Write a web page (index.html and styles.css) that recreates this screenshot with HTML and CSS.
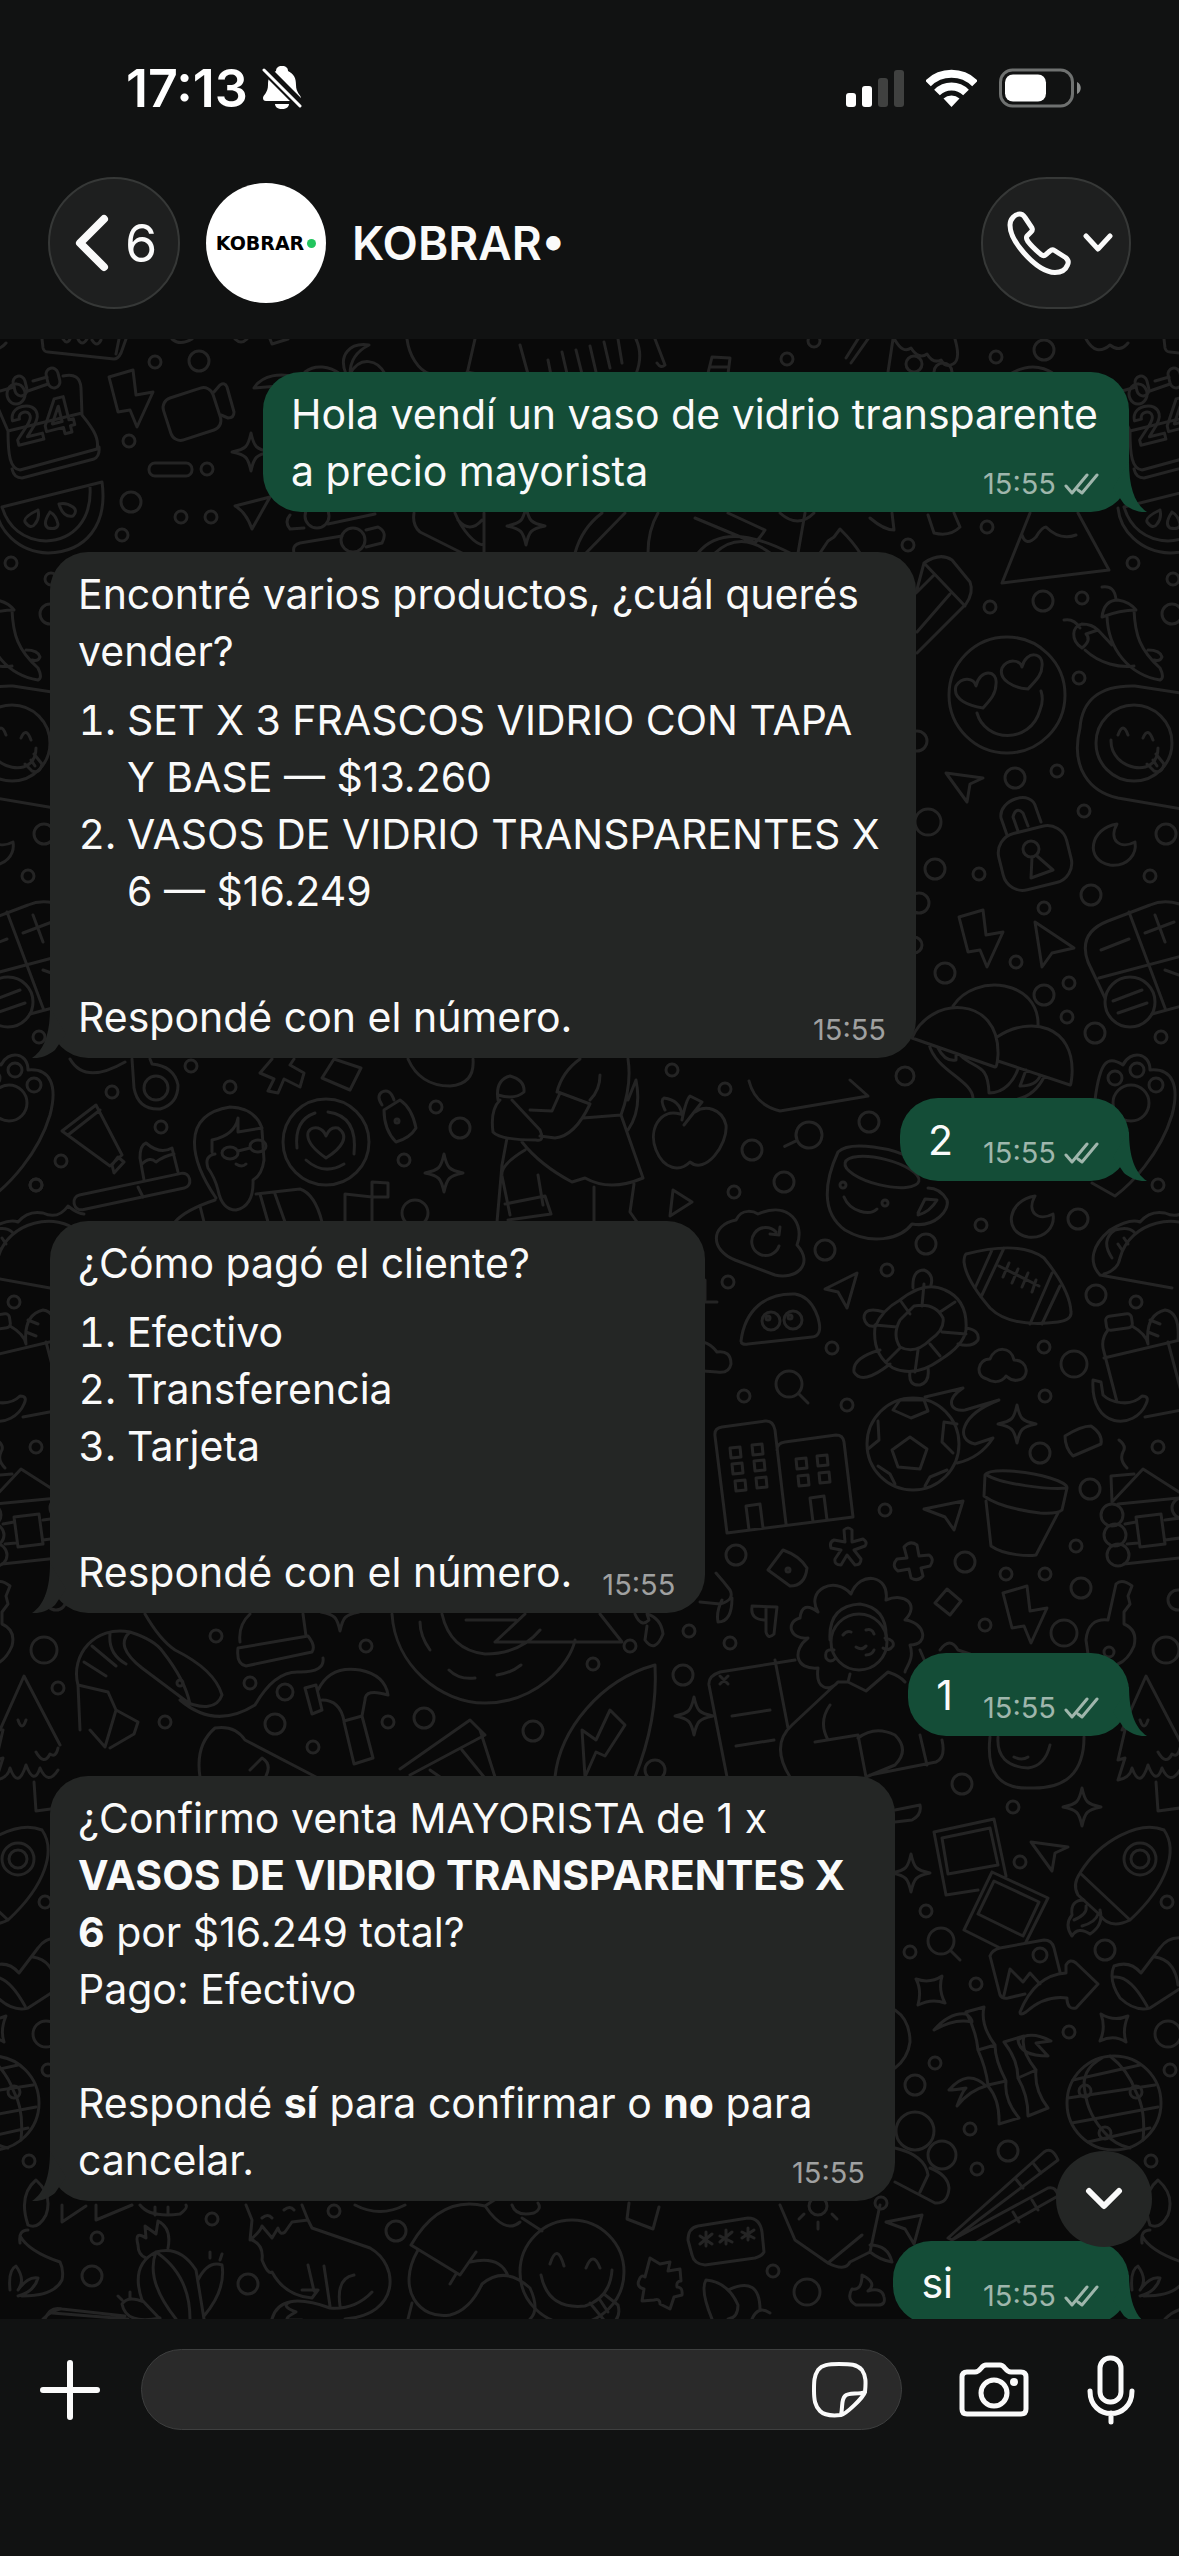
FILE: index.html
```html
<!DOCTYPE html>
<html lang="es">
<head>
	<meta charset="utf-8">
	<meta name="viewport" content="width=device-width, initial-scale=1">
	<title>KOBRAR</title>
	<link rel="stylesheet" href="styles.css">
</head>
<body>
	<!-- shared shapes -->
	<svg class="defs" width="0" height="0" aria-hidden="true">
		<defs>
			<g id="checks"><path d="M2 13l6 7L23 2M14 17l4 3L33 2"/></g>
			<path id="tail" d="M22 10C22 36 28 52 40 60C32 61 23 57 17 52L6 36Z"/>
			<circle id="dot" r="6"/>
			<circle id="ring" r="10"/>
			<path id="star" d="M0-19C3-5 5-3 19 0C5 3 3 5 0 19C-3 5-5 3-19 0C-5-3-3-5 0-19Z"/>
			<path id="bolt" d="M-21-21L3-28L6-3L23-6L7 29L0 12L-12 14Z"/>
			<path id="cursor" d="M-19-11L18-6L5 0L2 18Z"/>
			<path id="moon" d="M5-22C-22-18-28 14-2 19C16 21 25 8 23-4C8 4-4-6 5-22Z"/>
			<g id="lens"><circle r="13"/><path d="M10 10l9 9"/></g>
			<path id="cloud" d="M-16 11C-28 9-26-9-13-9C-8-22 8-22 11-8C26-8 27 11 15 12C8 14 4 8 3 8C-2 16-12 14-16 11Z"/>
		</defs>
	</svg>

	<header class="header">
		<div class="status">
			<div class="status-left">
				<span>17:13</span>
				<svg width="40" height="44" viewBox="0 0 40 44" aria-hidden="true">
					<path d="M20 0c4 0 6 2 6 5c6 3 8 7 8 14c0 8 5 10 5 13c0 2-1 3-3 3H4c-2 0-3-1-3-3c0-3 5-5 5-13c0-7 2-11 8-14c0-3 2-5 6-5ZM13 38h14c0 3-3 5-7 5s-7-2-7-5Z" fill="#fff"/>
					<path d="M3 3L38 38" stroke="#111" stroke-width="10"/>
					<path d="M2 4L38 40" stroke="#fff" stroke-width="3" stroke-linecap="round"/>
				</svg>
			</div>
			<div class="status-right">
				<svg width="58" height="38" viewBox="0 0 58 38" aria-hidden="true">
					<rect x="0" y="24" width="10" height="14" rx="3" fill="#fff"/>
					<rect x="16" y="17" width="10" height="21" rx="3" fill="#fff"/>
					<rect x="32" y="9" width="10" height="29" rx="3" fill="#404140"/>
					<rect x="48" y="1" width="10" height="37" rx="3" fill="#404140"/>
				</svg>
				<svg width="51" height="38" viewBox="0 0 51 38" fill="none" stroke="#fff" stroke-width="8" aria-hidden="true">
					<path d="M2 14.500A33.500 33.500 0 0 1 49 14.500"/>
					<path d="M11 23.500A20.500 20.500 0 0 1 40 23.500"/>
					<path d="M17.500 29.500A12 12 0 0 1 33.500 29.500L25.500 38Z" fill="#fff" stroke="none"/>
				</svg>
				<svg width="82" height="40" viewBox="0 0 82 40" aria-hidden="true">
					<rect x="1.500" y="2" width="72" height="36" rx="12" fill="none" stroke="#6f7170" stroke-width="3"/>
					<rect x="6" y="6.500" width="41" height="27" rx="8" fill="#fff"/>
					<path d="M78 14c5 2 5 10 0 12z" fill="#8a8c8b"/>
				</svg>
			</div>
		</div>

		<div class="nav">
			<button class="glass back" type="button" aria-label="Volver">
				<svg width="34" height="58" viewBox="0 0 34 58" aria-hidden="true"><path d="M29 5L5 29L29 53" class="line" stroke-width="8"/></svg>
				<span>6</span>
			</button>
			<div class="avatar">KOBRAR<i class="avatar-dot"></i></div>
			<h1 class="name">KOBRAR•</h1>
			<button class="glass call" type="button" aria-label="Llamar">
				<svg width="64" height="64" viewBox="0 0 64 64" aria-hidden="true"><path class="line" stroke-width="5" d="M12.700 3C16 3 17 5 18 6.500L25 17C26 19 25 20 24 21L20 25C18.500 27 20 29 21 30.500C25 36 30 40 34 43.500C36 45 37.500 45 39 43.500L43 40C44.500 38.500 46 38.500 47.500 39.500L58.500 46.500C61 48.500 62 51 60.500 54C58.500 59 54 61.500 48 61.500C36 61 25 51 17 42C9 33 3 22 3 14C3 8 8 3 12.700 3Z"/></svg>
				<svg width="30" height="20" viewBox="0 0 30 20" aria-hidden="true"><path class="line" stroke-width="5" d="M3 3L15 16L27 3"/></svg>
			</button>
		</div>
	</header>

	<main class="chat">
		<svg class="wallpaper" viewBox="0 339 1179 1980" preserveAspectRatio="xMinYMin slice" aria-hidden="true">
			<g id="doodles">
				<!-- top strip -->
				<path d="M1164 339L1165 348Q1166 352 1170 352L1236 359Q1240 359 1243 353L1248 339M1238 354L1241 339M1185 339q4 6 7 0M1200 339q4 8 9 0M1214 340q5 8 9 0"/>
				<path d="M172 339Q180 346 192 339M270 339L272 344L288 339M235 339q6 6 12 0M407 339C409 355 418 370 430 374M475 339L467 374M467 372L498 378M528 374L520 345M346 374C338 355 350 342 369 345C355 352 350 362 350 374C360 355 378 360 385 374M254 388C262 375 280 372 300 378M254 388L290 385M305 372C315 364 330 366 340 374"/>
				<path d="M548 360l4 20M562 352l6 26M576 350l6 24M590 346l6 26M604 342l6 26M618 339l4 24M636 339C642 352 640 364 636 374M655 339l10 26q-4 4-8-2M708 373l4-16l18 1l-2 16M710 367h18M846 358L858 339M851 363L868 339M893 339L888 372M895 340q8 14 16 8q8 12 16 6q6 10 14 6q4 8 12 4q8-4 2-25M1086 339q10 18 24 6q10 8 18-2"/>
				<use href="#dot" x="787" y="359"/><use href="#dot" x="996" y="357"/><use href="#dot" x="814" y="341"/><use href="#ring" x="1044" y="350"/><circle cx="914" cy="364" r="8"/><circle cx="943" cy="372" r="9"/><path d="M1010 374q24-14 44 0"/>
				<!-- calendar -->
				<path d="M1122 391l14-4M1155 381l14-4M1185 376Q1202 372 1203 388L1204 415C1212 425 1222 437 1219 449L1142 470C1132 469 1130 455 1130 431L1204 413M1130 431L1120 408M1134 469Q1136 478 1144 478L1216 459Q1222 456 1221 447"/>
				<rect x="1136" y="376" width="12" height="20" rx="6" transform="rotate(-14 1142 386)"/><rect x="1169" y="368" width="12" height="20" rx="6" transform="rotate(-14 1175 378)"/>
				<text x="1138" y="446" font-size="50" font-weight="700" transform="rotate(-14 1138 446)">24</text>
				<use href="#bolt" x="1252" y="398"/>
				<use href="#dot" x="1277" y="362"/><use href="#ring" x="1321" y="361"/><use href="#dot" x="1251" y="441"/>
				<rect x="1288" y="392" width="52" height="44" rx="10" transform="rotate(-18 1314 414)"/><path d="M1336 392L1342 385Q1347 382 1349 387L1356 412Q1356 418 1350 418L1343 415"/>
				<rect x="1271" y="463" width="43" height="13" rx="6"/><use href="#dot" x="1329" y="469"/><use href="#star" x="1373" y="452"/>
				<path d="M1124 507L1224 482C1230 525 1208 552 1170 553C1140 552 1120 530 1118 508M1212 487C1214 520 1195 540 1168 541C1145 540 1130 527 1124 507M1160 510Q1145 517 1147 522Q1153 530 1157 524Q1162 518 1160 510M1172 512Q1164 524 1170 528Q1180 530 1180 524Q1178 515 1172 512M1181 504Q1185 518 1195 516Q1200 511 1195 507Q1188 502 1181 504"/>
				<use href="#ring" x="1253" y="502"/><use href="#dot" x="1303" y="517"/><use href="#dot" x="1333" y="517"/><use href="#dot" x="1244" y="535"/><use href="#dot" x="1133" y="563"/>
				<path d="M1392 497L1357 506Q1368 512 1374 529ZM1138 384a9 10 0 1 0 .1 0M1147 392L1170 384"/>
				<!-- between first two bubbles -->
				<path d="M290 515Q284 522 290 529L304 528M328 524L375 514M294 553Q292 545 300 543L342 536M366 530L378 527Q388 532 382 543L366 547M414 513Q412 525 420 532L462 553M455 513C462 530 475 545 484 545M484 513V553M458 520Q470 534 482 520M575 553C580 535 590 522 602 513M586 553L625 513M648 553Q648 530 658 513M695 518L755 543Q762 535 765 530L728 513M698 553Q725 520 790 553M715 553Q740 530 770 553M805 513L798 553M820 553l8-12l6-4l6-8q14 14 20 24M870 518q14 12 24 12l-2-17M928 515l6 18q16 4 26-6l-6-14"/>
				<circle cx="317" cy="516" r="12"/><circle cx="353" cy="540" r="12"/><use href="#star" x="526" y="526"/><use href="#dot" x="908" y="545"/><use href="#dot" x="987" y="527"/><path d="M780 513q18 16 34 0"/>
				<path d="M1030 513L1002 583L1109 570L1078 513M1022 535q4 12 14 2q6-10 10-10q14 14 30 8"/>
				<path d="M916 593L924 563Q940 552 952 560L970 582Q974 592 966 604L917 653M924 563L965 606M934 575L917 592M950 594L917 632"/>
				<!-- faces, peppers, padlock -->
				<circle cx="1007" cy="695" r="58"/>
				<path d="M983 708C970 706 952 700 956 686C962 676 974 678 976 686C980 668 998 670 996 684C996 694 990 700 983 708M1028 689C1014 688 998 680 1002 668C1008 658 1020 660 1022 667C1026 650 1044 652 1042 666C1042 676 1034 682 1028 689M977 713C985 742 1030 745 1040 710Q1044 700 1041 691"/>
				<path d="M1102 587Q1115 585 1116 600M1102 617Q1104 600 1118 600Q1130 602 1136 610Q1120 610 1102 617ZM1107 616C1108 650 1130 675 1160 680Q1165 678 1160 668C1140 650 1135 635 1134 610M1064 620Q1074 618 1080 628M1082 648C1070 640 1072 626 1082 624Q1092 624 1098 630L1086 634Q1092 640 1082 648M1085 650C1100 664 1120 668 1134 666M1098 630L1112 645M1148 650Q1160 650 1162 657Q1160 662 1154 660"/>
				<circle cx="1134" cy="743" r="38"/><path d="M1200 696L1135 686C1100 685 1082 700 1080 728C1070 768 1090 792 1118 798L1200 812M1118 735q5-14 10 0M1143 738q5-12 10 2M1111 740C1110 770 1158 780 1158 748M1147 764L1154 771Q1162 774 1164 764L1156 754M1153 760l4 6"/>
				<use href="#ring" x="1043" y="601"/><use href="#dot" x="990" y="607"/><use href="#dot" x="1082" y="598"/><use href="#ring" x="1172" y="614"/><use href="#dot" x="1173" y="579"/><use href="#dot" x="1079" y="678"/><use href="#cursor" x="965" y="784"/>
				<use href="#ring" x="1015" y="778"/><use href="#dot" x="1057" y="771"/><use href="#dot" x="1084" y="811"/><use href="#moon" x="1112" y="846"/><use href="#ring" x="1166" y="834"/><use href="#ring" x="917" y="741"/>
				<rect x="1000" y="829" width="70" height="58" rx="20" transform="rotate(-14 1035 858)"/><path d="M1007 835L1001 818C998 800 1032 788 1036 808L1041 822M1018 831L1013 817Q1016 806 1023 813L1028 826M1032 857L1031 878L1053 870L1037 856"/><circle cx="1031" cy="849" r="8"/>
				<circle cx="928" cy="822" r="13"/><use href="#ring" x="935" y="869"/><use href="#dot" x="979" y="874"/><use href="#ring" x="919" y="903"/><use href="#ring" x="1091" y="895"/><use href="#dot" x="1150" y="876"/><use href="#dot" x="1044" y="908"/><use href="#bolt" x="980" y="938"/>
				<path d="M1035 922L1074 948L1052 953L1042 967Z"/><use href="#ring" x="945" y="973"/><use href="#dot" x="1016" y="962"/><use href="#ring" x="1044" y="995"/><use href="#dot" x="1069" y="983"/><use href="#dot" x="1067" y="1017"/><use href="#ring" x="1095" y="1033"/><use href="#dot" x="1161" y="1037"/><circle cx="914" cy="945" r="8"/>
				<path d="M1105 998L1088 962C1080 940 1090 928 1108 921L1150 905Q1166 898 1185 906M1129 912L1165 1008M1099 978L1182 956M1101 950L1129 939M1145 933L1174 922M1155 915L1165 942M1165 970l14 5M1152 1014L1182 1006"/><circle cx="1130" cy="1002" r="25"/><path d="M1113 1001l29-11M1118 1013l29-10"/>
				<!-- mushrooms and paw -->
				<path d="M912 1038C930 995 1000 995 998 1055Q997 1068 995 1067ZM953 1006C975 972 1040 980 1038 1026M997 1037C1030 1015 1075 1025 1072 1075Q1071 1086 1070 1085L998 1061M929 1044C935 1070 972 1080 973 1098M938 1048Q945 1062 956 1060V1054M960 1055C975 1070 988 1062 989 1093C1005 1093 1014 1080 1018 1069M1026 1070L1020 1086Q1036 1086 1040 1076M1044 1077Q1035 1095 1018 1099"/>
				<path d="M1095 1100C1100 1060 1108 1055 1123 1065C1130 1050 1150 1052 1150 1070C1172 1068 1180 1085 1172 1115C1160 1155 1130 1185 1115 1196L1092 1183"/><circle cx="1115" cy="1078" r="7"/><circle cx="1137" cy="1070" r="7"/><circle cx="1156" cy="1085" r="7"/><circle cx="1131" cy="1103" r="18"/>
				<!-- row under the product list -->
				<path d="M70 1059Q85 1085 125 1062M132 1059L134 1088Q138 1110 160 1109Q178 1104 178 1085Q174 1066 152 1064L150 1059M272 1059l-12 14l14 6l-6 12l10 2l6-14l16 8l4-14l-14-8l4-6M334 1059L322 1078L350 1090L361 1068ZM408 1059Q420 1086 450 1086Q475 1084 473 1059M62 1131L96 1105L122 1155L110 1166ZM68 1135L100 1110M112 1165L118 1157L124 1162L114 1173Z"/>
				<circle cx="156" cy="1088" r="12"/><use href="#dot" x="191" y="1066"/><use href="#dot" x="112" y="1092"/><use href="#dot" x="161" y="1127"/><use href="#dot" x="230" y="1087"/><use href="#dot" x="61" y="1161"/><use href="#dot" x="36" y="1185"/>
				<rect x="73" y="1184" width="118" height="15" rx="7" transform="rotate(-12 132 1192)"/><path d="M138 1187l5 10M144 1180L140 1158Q140 1145 146 1143Q160 1155 172 1148L178 1172M142 1164q8-8 14-2q8-6 18-8"/>
				<path d="M216 1198C190 1160 180 1115 230 1107Q255 1108 262 1128L238 1132V1118Q235 1135 212 1140V1152M215 1154Q204 1156 208 1168Q215 1178 218 1190Q222 1210 236 1210Q254 1206 253 1180Q262 1175 264 1160L262 1130M175 1222Q185 1210 215 1200M200 1206l4 16M256 1194L300 1189Q315 1194 322 1222M275 1194l10 28M260 1194l8 28M236 1164q6 4 10 0"/><ellipse cx="230" cy="1153" rx="8" ry="6"/><ellipse cx="258" cy="1146" rx="8" ry="6"/><path d="M238 1151l12-3"/>
				<circle cx="326" cy="1142" r="43"/><path d="M326 1158C300 1140 306 1126 318 1128Q324 1130 326 1136Q330 1126 338 1128C350 1136 342 1148 326 1158M297 1148Q294 1120 315 1113M328 1112Q358 1116 354 1154M306 1160Q324 1176 344 1164M345 1222V1194L372 1197V1222M372 1197V1182L388 1183V1197Z"/>
				<path d="M382 1105Q376 1096 382 1092Q390 1088 394 1100M384 1110L400 1100Q412 1108 416 1128Q410 1138 396 1142Q384 1130 384 1110Z"/><circle cx="397" cy="1121" r="2"/><use href="#ring" x="460" y="1128"/><use href="#dot" x="436" y="1107"/><use href="#dot" x="404" y="1160"/><use href="#star" x="444" y="1173"/><circle cx="415" cy="1213" r="13"/>
				<path d="M498 1100Q495 1080 510 1076Q525 1080 524 1092Q515 1100 498 1095M512 1100L540 1130Q545 1142 536 1140Q500 1140 493 1132Q490 1110 500 1100M530 1110L552 1111L560 1093M557 1092Q562 1072 580 1059M590 1100Q600 1090 600 1075M558 1092L590 1104Q575 1136 555 1138L540 1136M583 1118L621 1115L643 1178Q610 1192 585 1178L572 1182Q540 1165 522 1142M621 1115Q632 1085 628 1059M628 1100l8-20q6 30-8 50M507 1138L502 1165L497 1222M525 1150Q500 1165 502 1176L510 1215M538 1175L543 1205M505 1204L545 1196L551 1214L508 1220M594 1187V1222M634 1184L630 1212L637 1222"/>
				<path d="M665 1110Q660 1100 664 1098Q680 1100 682 1115M682 1120Q686 1100 690 1096L702 1102L684 1125M680 1114C660 1108 648 1130 656 1150C664 1170 680 1172 690 1162C705 1175 728 1145 726 1125C722 1108 705 1105 695 1112M673 1190L692 1202L670 1216ZM749 1081Q755 1105 780 1111L868 1096L850 1080"/><use href="#dot" x="672" y="1070"/><use href="#dot" x="725" y="1089"/><use href="#dot" x="734" y="1192"/><use href="#ring" x="752" y="1150"/><use href="#ring" x="784" y="1182"/><use href="#ring" x="869" y="1122"/><circle cx="905" cy="1076" r="9"/>
				<use href="#lens" transform="translate(809 1135) rotate(110)"/>
				<!-- mug -->
				<ellipse cx="882" cy="1172" rx="38" ry="13" transform="rotate(14 882 1172)"/><path d="M915 1160C895 1148 850 1140 838 1152C825 1180 820 1212 845 1230C870 1245 900 1240 912 1224C935 1228 950 1210 947 1200Q940 1188 928 1188M918 1213L925 1199L937 1200Q930 1212 918 1215M844 1197C850 1212 870 1216 877 1209"/><circle cx="843" cy="1185" r="3"/><circle cx="885" cy="1203" r="3"/>
				<path d="M735 1260C710 1250 710 1225 736 1220C742 1207 755 1212 758 1214C790 1200 805 1225 797 1245C815 1265 795 1280 775 1275ZM779 1246A14 14 0 1 1 776 1232M770 1234l9 1l1-8"/><use href="#ring" x="825" y="1250"/><use href="#ring" x="926" y="1244"/><use href="#dot" x="728" y="1282"/><use href="#dot" x="887" y="1270"/><use href="#dot" x="981" y="1225"/><use href="#ring" x="1078" y="1219"/><use href="#moon" x="1030" y="1218"/>
				<path d="M825 1289L857 1273L847 1308L838 1292ZM741 1341C745 1310 765 1293 795 1294C815 1297 822 1325 819 1332Q817 1337 812 1337L748 1344Q741 1345 741 1341"/><circle cx="771" cy="1321" r="9"/><circle cx="793" cy="1320" r="9"/><circle cx="768" cy="1318" r="2"/><circle cx="790" cy="1317" r="2"/><path d="M705 1280v20M703 1302h14M703 1342q8 2 14 10q14-2 14 12q-2 10-14 8l-14-1"/>
				<!-- turtle -->
				<path d="M875 1327Q882 1310 900 1300Q925 1280 945 1290Q968 1300 966 1330Q964 1345 940 1360Q915 1378 893 1368Q872 1355 875 1327ZM914 1306Q935 1302 943 1318Q945 1330 930 1340Q915 1355 900 1347Q892 1335 900 1320ZM924 1284l-2 22M900 1300l10 14M955 1302l-15 10M875 1325l22 2M966 1334l-24-2M940 1356l-10-12M915 1372l3-22M886 1362l14-14M913 1288Q912 1270 924 1270Q934 1274 931 1285M884 1312Q864 1306 864 1318Q866 1328 876 1326M966 1328Q980 1330 978 1340Q972 1348 958 1344M880 1350Q852 1358 854 1372Q862 1386 890 1364M910 1372Q908 1386 920 1385Q930 1382 928 1368"/>
				<path d="M966 1254Q1020 1240 1044 1258Q1070 1290 1071 1312Q1072 1320 1058 1322Q1010 1328 990 1308Q966 1280 964 1262Q964 1256 966 1254ZM992 1250L975 1288M1004 1248L981 1297M1052 1273L1030 1324M1060 1286L1042 1324M999 1266l40 20M1009 1263l-6 14M1018 1269l-6 14M1028 1273l-6 14M1036 1280l-4 12"/>
				<use href="#cloud" x="1003" y="1368"/><circle cx="1074" cy="1364" r="13"/><use href="#dot" x="1044" y="1347"/><use href="#dot" x="1045" y="1396"/><use href="#dot" x="832" y="1348"/><use href="#lens" x="789" y="1384"/><use href="#dot" x="744" y="1396"/><use href="#dot" x="847" y="1405"/><use href="#ring" x="1096" y="1295"/><use href="#dot" x="1136" y="1302"/><use href="#dot" x="1158" y="1185"/>
				<!-- buildings -->
				<path d="M727 1533L715 1436Q714 1428 722 1427L765 1421Q773 1420 775 1430L786 1524M777 1450Q777 1443 785 1442L836 1435Q843 1435 844 1442L853 1517L727 1533M749 1530L746 1506L760 1504L763 1528M813 1522L810 1498L824 1496L827 1520"/>
				<path d="M730 1448l10-1l1 10l-10 1zM752 1445l10-1l1 10l-10 1zM732 1464l10-1l1 10l-10 1zM754 1461l10-1l1 10l-10 1zM735 1481l10-1l1 10l-10 1zM756 1478l10-1l1 10l-10 1zM796 1459l10-1l1 10l-10 1zM817 1456l10-1l1 10l-10 1zM798 1476l10-1l1 10l-10 1zM819 1473l10-1l1 10l-10 1z"/>
				<circle cx="913" cy="1444" r="46"/><path d="M892 1450L910 1437L927 1449L920 1469L898 1467ZM893 1410L900 1400H924L928 1411L911 1418ZM944 1422L957 1424M944 1422L942 1442L953 1453M878 1421L879 1440L868 1449M878 1466L890 1474L895 1484M947 1470L930 1477L925 1486M925 1397L963 1388C945 1400 950 1412 965 1410L999 1400C960 1415 955 1440 975 1444L993 1438Q980 1458 957 1463"/>
				<use href="#star" x="1017" y="1424"/><use href="#ring" x="1040" y="1453"/><path d="M1065 1436q16-10 26-10q12 8 10 18l-28 12q-8-8-8-20Z"/>
				<path d="M985 1475Q988 1470 1010 1471C1040 1473 1068 1482 1067 1488L1062 1510Q1058 1514 1040 1513Q1000 1508 984 1496ZM987 1475C1000 1484 1050 1490 1067 1488M986 1501L991 1546C1005 1556 1030 1556 1036 1555L1058 1513M924 1509L963 1501L954 1530L945 1517Z"/><use href="#dot" x="885" y="1510"/><use href="#ring" x="1090" y="1489"/>
				<!-- taco, lunch bag, cabin -->
				<path d="M1100 1275C1088 1262 1092 1245 1110 1230Q1130 1218 1140 1222Q1150 1210 1165 1213Q1180 1220 1190 1206Q1200 1214 1206 1214M1104 1274Q1118 1270 1120 1258C1130 1220 1180 1212 1200 1232M1112 1258Q1100 1240 1115 1230Q1128 1226 1134 1232M1100 1275L1172 1288M1118 1244l4 6M1124 1238l4 6"/>
				<rect x="1106" y="1315" width="26" height="14" rx="4" transform="rotate(-8 1119 1322)"/><path d="M1108 1330Q1100 1340 1104 1352L1117 1402M1104 1358L1180 1340M1132 1326Q1146 1334 1148 1344Q1145 1315 1165 1310Q1180 1312 1178 1340M1150 1320l10 4M1148 1332l10 4M1168 1342L1182 1395M1145 1417L1182 1410M1093 1380L1101 1382L1103 1395C1110 1402 1130 1408 1142 1396Q1150 1396 1146 1404C1135 1430 1090 1430 1093 1380"/>
				<use href="#dot" x="1158" y="1447"/><path d="M1119 1440q8 6 4 12q-4 8 4 16M1112 1502L1111 1476L1134 1474M1112 1502L1143 1469L1179 1492M1118 1504L1180 1498M1125 1524L1136 1522M1165 1520L1180 1518M1127 1544L1138 1543M1165 1540L1180 1538M1124 1564L1180 1558M1136 1517L1161 1514L1165 1544L1140 1547Z"/><circle cx="1112" cy="1515" r="11"/><circle cx="1115" cy="1535" r="11"/><circle cx="1118" cy="1555" r="11"/><circle cx="1182" cy="1508" r="10"/>
				<path d="M845 1542l-1-12q4-4 8 0l0 12l11-3q5 3 2 7l-11 4l7 9q0 6-6 6l-8-10l-6 10q-7 0-6-6l6-9l-10-2q-2-6 3-8ZM907 1558l-3-11q6-7 13-2l2 11l10-1q6 4 1 11l-9 2l2 8q-5 6-12 2l-2-9l-11 2q-7-5-1-12ZM768 1570L783 1550Q800 1556 807 1568Q805 1586 790 1586ZM935 1603L947 1589L961 1601L950 1615ZM752 1606L777 1607L774 1634Q768 1640 766 1632V1608M766 1620Q750 1620 752 1607"/><circle cx="788" cy="1570" r="2"/>
				<use href="#ring" x="736" y="1555"/><use href="#ring" x="965" y="1562"/><use href="#dot" x="1006" y="1574"/><use href="#dot" x="1045" y="1574"/><use href="#dot" x="1076" y="1546"/><use href="#ring" x="1081" y="1588"/><use href="#dot" x="985" y="1625"/><use href="#bolt" x="1024" y="1614"/><circle cx="1064" cy="1633" r="13"/><circle cx="1166" cy="1650" r="13"/><use href="#ring" x="1178" y="1600"/>
				<path d="M1108 1620L1116 1584Q1122 1578 1132 1586L1128 1596L1130 1604L1124 1612V1624Q1138 1630 1134 1646Q1128 1660 1118 1664M1108 1620Q1088 1618 1086 1640L1088 1654"/><circle cx="1109" cy="1652" r="5"/>
				<!-- girl with notebook -->
				<circle cx="859" cy="1642" r="28"/><path d="M830 1640Q828 1606 860 1604Q888 1608 886 1640M834 1650q-10-2-8 8q4 6 10 0M885 1638q10 2 8 8q-4 6-10 2M843 1635q4-5 8-3M866 1630q6-2 8 4M856 1647q6 4 10-1M866 1655q6 0 8-5M800 1618C785 1622 790 1640 808 1638C792 1650 795 1670 818 1668C815 1690 830 1692 838 1682M818 1612C805 1590 835 1575 851 1594C860 1570 890 1575 886 1600C905 1592 920 1605 905 1620C925 1622 930 1645 910 1645C915 1660 905 1668 905 1672M818 1612Q802 1600 800 1618M850 1674L848 1682L838 1682L792 1725Q770 1745 790 1777M848 1682L866 1691L888 1672Q900 1676 905 1682M830 1705Q818 1722 828 1740M815 1742L858 1735L866 1777M795 1660L720 1672Q708 1676 709 1685L727 1777M775 1660L788 1728M732 1716l38-6M736 1746l38-6M720 1676l8 8M720 1684l8-8M858 1738Q875 1725 895 1735Q910 1750 895 1765L866 1777M920 1650l6 14M920 1735L927 1765M942 1740q4 18-6 22L870 1775"/>
				<path d="M990 1737Q984 1790 1030 1788Q1084 1790 1084 1737M998 1737Q996 1766 1028 1768Q1045 1766 1050 1745M1014 1757q8 4 14 0M940 1650q10-14 18 0l12 4"/><use href="#star" x="694" y="1716"/><use href="#ring" x="683" y="1675"/><use href="#dot" x="730" y="1643"/><use href="#dot" x="689" y="1631"/>
				<!-- beanie, shrimp, hammer, surfboard -->
				<path d="M716 1573Q724 1582 730 1590Q735 1600 720 1604L700 1602M722 1600q-6 12-4 22q14 0 14-24M145 1614Q160 1640 175 1650Q215 1670 222 1695Q215 1715 180 1700M78 1685C70 1655 95 1625 130 1632Q155 1640 163 1652Q185 1680 190 1704L142 1668M78 1685L80 1730M78 1685L108 1692M84 1662l22 14M92 1646l24 20M110 1634q-2 20 16 30M130 1632q-16 14 12 36M108 1692L116 1710L105 1747L90 1730M116 1710L138 1722L134 1734L110 1748M180 1700Q215 1730 255 1705Q275 1670 300 1672Q325 1672 323 1658"/><circle cx="180" cy="1683" r="3"/>
				<path d="M240 1642Q238 1625 250 1614M303 1614L306 1636M238 1648L308 1636Q316 1646 312 1652L246 1666Q236 1664 238 1648ZM305 1688L316 1685L322 1710L312 1714ZM318 1690Q330 1665 360 1670Q385 1675 388 1695Q365 1688 365 1700L362 1716L344 1721Q340 1700 322 1700M344 1722L354 1764L373 1758L362 1716"/>
				<use href="#star" x="340" y="1612"/><use href="#dot" x="216" y="1636"/><use href="#dot" x="250" y="1683"/><use href="#dot" x="165" y="1722"/><use href="#ring" x="275" y="1724"/><use href="#dot" x="313" y="1747"/><use href="#dot" x="388" y="1722"/><use href="#ring" x="424" y="1718"/><use href="#dot" x="366" y="1646"/><circle cx="285" cy="1692" r="8"/><use href="#ring" x="533" y="1731"/><use href="#dot" x="593" y="1664"/>
				<path d="M392 1614C395 1665 440 1703 485 1703C535 1703 570 1665 575 1640M442 1614Q450 1650 485 1654Q520 1654 540 1630M420 1622q0 14 10 28M449 1670q10 10 26 8M497 1675q14-2 24-10M466 1620h50M495 1642L525 1614M495 1642H622L600 1614M200 1777Q195 1745 215 1728Q235 1725 245 1740L316 1777M400 1769L470 1720L485 1735L410 1775M480 1730L495 1777M462 1750L484 1777M430 1770l10 7M250 1770l12-12q10 6 4 18"/>
				<path d="M555 1777C560 1730 600 1680 655 1665Q658 1720 635 1777M585 1777L582 1730L596 1740L610 1710L625 1725L605 1756L596 1752Z"/><use href="#ring" x="655" y="1770"/><use href="#dot" x="630" y="1646"/><path d="M635 1614q6 14 14 6l-2-6q14 4 16 20q-8 20-18 6l2-14"/><use href="#dot" x="58" y="1688"/>
				<!-- tree -->
				<path d="M1122 1730L1146 1676L1182 1745M1125 1730L1118 1760L1125 1758L1118 1780Q1130 1778 1132 1768Q1140 1790 1148 1765Q1156 1786 1162 1768Q1170 1786 1180 1770M1140 1720q4 12 8 0M1158 1752q8 14 14 2q6 4 8 -6M1156 1782L1158 1811L1180 1808"/>
				<!-- right column -->
				<path d="M895 1810L920 1805Q922 1815 912 1820L895 1822M934 1832L994 1819L1006 1876M934 1832L946 1895L978 1890M942 1838L990 1828L998 1865L948 1874ZM992 1872L1048 1898L1026 1942M992 1872L964 1930L1000 1948M994 1881L1039 1902L1023 1936L978 1914ZM990 1956Q992 1950 1000 1948L1044 1940Q1052 1940 1054 1948L1060 1972M990 1956L1000 1995Q1002 1999 1008 1998L1025 1994M1004 1995L1010 1969L1023 1982L1030 1973L1040 1984M1020 2012Q1035 1975 1066 1973V1965Q1070 1958 1076 1963L1098 1984L1076 2008Q1068 2010 1067 2000V1998Q1045 1995 1026 2012Q1020 2016 1020 2012Z"/><circle cx="1040" cy="1955" r="7"/>
				<path d="M1080 1873C1100 1840 1140 1820 1164 1830C1178 1850 1168 1885 1130 1920Q1110 1930 1100 1915L1078 1895Q1072 1885 1080 1873ZM1080 1873L1130 1920M1084 1900Q1070 1900 1072 1915Q1064 1925 1072 1936Q1078 1926 1090 1934Q1104 1925 1100 1910M1074 1920q14-6 12-14M1082 1926q14-4 16-12"/><circle cx="1140" cy="1859" r="16"/><circle cx="1140" cy="1859" r="9"/>
				<use href="#ring" x="962" y="1784"/><use href="#dot" x="1013" y="1807"/><use href="#star" x="1082" y="1807"/><use href="#star" x="911" y="1873"/><use href="#cursor" x="1050" y="1853"/><use href="#dot" x="1020" y="1862"/><use href="#dot" x="926" y="1911"/><use href="#lens" x="941" y="1941"/><use href="#dot" x="910" y="1952"/><use href="#dot" x="976" y="1984"/><circle cx="1105" cy="1950" r="10"/><use href="#dot" x="1167" y="1902"/>
				<path d="M916 1979Q930 1984 942 1976Q938 1990 945 2003Q932 1998 918 2005Q922 1990 916 1979ZM1101 2014Q1114 2022 1128 2016Q1122 2030 1126 2042Q1114 2034 1100 2041Q1106 2028 1101 2014Z"/><path d="M1141 1973L1160 1948Q1168 1936 1184 1938M1141 1973Q1130 1960 1114 1966Q1108 1980 1120 1998Q1135 2012 1150 2008L1184 1986M1114 1977Q1130 1975 1147 2006M1155 1957Q1175 1960 1178 1985"/>
				<path d="M966 2012L984 2007Q980 2025 995 2045L978 2050M966 2012Q976 2030 978 2050Q986 2068 988 2085L1006 2081Q995 2060 995 2045M988 2086Q1000 2100 999 2124L1019 2118Q1004 2100 1006 2082M934 2030Q950 2012 966 2014Q972 2018 972 2022Q955 2018 934 2030M949 2090Q968 2068 986 2086Q970 2090 957 2106Q962 2092 966 2088Q955 2090 949 2090M1004 2042L1024 2036Q1020 2050 1036 2070L1018 2078Q1018 2060 1004 2042M1018 2078Q1028 2095 1028 2116L1048 2108Q1034 2090 1036 2070M1018 2040Q1030 2030 1051 2041L1036 2043L1048 2056Q1020 2056 1018 2040"/>
				<circle cx="1114" cy="2103" r="47"/><path d="M1073 2080L1140 2065M1068 2098L1155 2085M1072 2123L1158 2107M1088 2142L1150 2128M1102 2058Q1080 2070 1085 2092Q1088 2115 1105 2133Q1115 2145 1130 2148M1110 2056Q1128 2070 1136 2092Q1146 2110 1143 2140"/><use href="#dot" x="1085" y="2091"/><use href="#dot" x="1136" y="2092"/><use href="#dot" x="1105" y="2133"/>
				<circle cx="1168" cy="2034" r="13"/><use href="#dot" x="1069" y="2032"/><use href="#dot" x="1170" y="2070"/><use href="#dot" x="935" y="2063"/><use href="#ring" x="915" y="2085"/><circle cx="915" cy="2131" r="19"/><circle cx="942" cy="2155" r="14"/><use href="#dot" x="970" y="2129"/><use href="#ring" x="1008" y="2151"/><use href="#dot" x="977" y="2169"/><use href="#dot" x="1151" y="2161"/><use href="#dot" x="881" y="2203"/>
				<path d="M895 2010Q910 2020 910 2042Q908 2058 895 2068M895 2148Q925 2155 928 2175L920 2192M895 2182L935 2203Q948 2204 949 2188Q948 2175 930 2168M948 2238L1044 2152Q1052 2146 1058 2160L952 2240ZM952 2240L1048 2188Q1056 2186 1058 2196L975 2243M1015 2178l8 10M1033 2163l8 10M1013 2212l6 10M1032 2200l6 10M886 2222L922 2215L914 2244L905 2229Z"/>
				<!-- bottom row -->
				<path d="M1150 2225Q1140 2195 1158 2180Q1175 2195 1168 2215Q1160 2230 1150 2225M1142 2243Q1140 2230 1150 2230M1142 2236C1150 2250 1170 2258 1182 2262Q1186 2270 1184 2280Q1176 2296 1144 2296M1132 2290Q1130 2270 1138 2266Q1148 2280 1140 2290Q1150 2276 1160 2278Q1156 2292 1140 2296M1165 2319q8-8 17-10"/>
				<path d="M62 2205V2222L86 2206M96 2205V2220L132 2205M140 2205Q150 2218 180 2214Q188 2208 186 2205M155 2207v8M168 2207v8M138 2245Q134 2230 146 2238L145 2226L156 2234L158 2221Q172 2228 168 2248M138 2245Q138 2255 146 2258M156 2252Q130 2265 142 2300L160 2319M156 2252Q180 2245 196 2270L204 2319M156 2252Q145 2280 176 2319M156 2252Q190 2275 190 2319M198 2280Q208 2260 222 2265Q226 2290 204 2316M144 2302Q128 2295 122 2304Q126 2325 160 2318M210 2258v-6M220 2260l2-6M122 2300l-4-4M130 2298v-6"/>
				<path d="M246 2205L252 2220L250 2240Q260 2232 262 2226L272 2238L278 2228Q280 2236 285 2232L292 2222L308 2220L302 2205M308 2220L312 2228L370 2248C400 2265 400 2315 345 2319M252 2240Q264 2245 262 2260Q268 2275 272 2272Q285 2296 312 2298L318 2290L302 2290M272 2319Q280 2290 330 2308Q355 2310 372 2292M308 2265l6 26M324 2266l6 40M340 2306Q336 2278 354 2275M290 2302q-10 4 6 10q-12 6-8 8h14M262 2218q6-5 10 0M284 2210q6-5 10 0"/>
				<circle cx="212" cy="2219" r="6"/><use href="#dot" x="97" y="2238"/><use href="#ring" x="92" y="2276"/><use href="#ring" x="248" y="2284"/><use href="#dot" x="334" y="2211"/><use href="#ring" x="396" y="2231"/><path d="M355 2205Q380 2218 405 2205M45 2319Q50 2306 62 2309L125 2316M52 2313L128 2319"/>
				<path d="M411 2245Q440 2195 485 2206L510 2190M411 2245L460 2275L476 2252M485 2206Q505 2235 520 2222M418 2250C395 2290 420 2320 450 2315Q470 2310 482 2284Q505 2265 530 2288Q540 2310 530 2319M470 2262Q500 2255 508 2276M522 2218L542 2231M450 2284l6-10M408 2319l4-16M512 2205q4 12 22 8q8-4 4-10"/><circle cx="572" cy="2272" r="52"/><path d="M550 2264q7-22 14 2M586 2268q7-18 14 0M541 2275Q548 2310 585 2306Q610 2298 612 2270M590 2303L608 2325Q622 2320 618 2305L604 2294M600 2300l8 12"/>
				<path d="M629 2203l-2 16l26 10l6-22M688 2240Q688 2228 698 2226L748 2218Q760 2218 762 2232L764 2252Q762 2256 755 2258L705 2265Q694 2264 692 2255ZM700 2236l12 8M706 2232v14M712 2234l-12 10M720 2236l12 6M726 2230v14M732 2232l-12 10M742 2232l12 6M748 2228v12M754 2230l-12 8M780 2205L795 2240L828 2263Q845 2272 850 2262L870 2252L880 2205M828 2263L862 2235M870 2245Q888 2245 892 2262Q880 2260 870 2252"/><circle cx="818" cy="2206" r="9"/><path d="M804 2214l-5 5M818 2222v7M832 2214l5 5"/>
				<path d="M650 2258l10 6l10-2l-2 9l12-2l1 12q-5 0-4 6q6 0 5 8l-8 2l-4 12l-10-5q0-6-6-4l-12 1l2-12q-8-2-5-9q2-6 6-3ZM712 2319Q700 2290 706 2280Q728 2282 738 2305Q738 2318 728 2319M728 2290Q760 2275 760 2310M752 2319q6-14 18-6M862 2275q16 8 6 16q14-4 16 6q2 8-6 8h-22q-10-6-4-16q10 2 10-14Z"/><use href="#dot" x="773" y="2271"/><circle cx="807" cy="2292" r="13"/>
			</g>
			<use href="#doodles" x="-1122"/>
		</svg>

		<div class="messages">
			<div class="bubble out">
				<p>Hola vendí un vaso de vidrio transparente a precio mayorista
					<span class="meta"><time>15:55</time><svg class="read" width="35" height="22"><use href="#checks"/></svg></span></p>
				<svg class="tail" width="40" height="60"><use href="#tail"/></svg>
			</div>

			<div class="bubble in">
				<p>Encontré varios productos, ¿cuál querés vender?</p>
				<ol>
					<li>SET X 3 FRASCOS VIDRIO CON TAPA Y BASE — $13.260</li>
					<li>VASOS DE VIDRIO TRANSPARENTES X 6 — $16.249</li>
				</ol>
				<p><br>Respondé con el número. <span class="meta"><time>15:55</time></span></p>
				<svg class="tail" width="40" height="60"><use href="#tail"/></svg>
			</div>

			<div class="bubble out">
				<p>2 <span class="meta"><time>15:55</time><svg class="read" width="35" height="22"><use href="#checks"/></svg></span></p>
				<svg class="tail" width="40" height="60"><use href="#tail"/></svg>
			</div>

			<div class="bubble in">
				<p>¿Cómo pagó el cliente?</p>
				<ol>
					<li>Efectivo</li>
					<li>Transferencia</li>
					<li>Tarjeta</li>
				</ol>
				<p><br>Respondé con el número. <span class="meta"><time>15:55</time></span></p>
				<svg class="tail" width="40" height="60"><use href="#tail"/></svg>
			</div>

			<div class="bubble out">
				<p>1 <span class="meta"><time>15:55</time><svg class="read" width="35" height="22"><use href="#checks"/></svg></span></p>
				<svg class="tail" width="40" height="60"><use href="#tail"/></svg>
			</div>

			<div class="bubble in confirm">
				<p>¿Confirmo venta MAYORISTA de 1 x <b>VASOS DE VIDRIO TRANSPARENTES X 6</b> por $16.249 total?<br>Pago: Efectivo</p>
				<p><br>Respondé <b>sí</b> para confirmar o <b>no</b> para cancelar. <span class="meta"><time>15:55</time></span></p>
				<svg class="tail" width="40" height="60"><use href="#tail"/></svg>
			</div>

			<div class="bubble out">
				<p>si <span class="meta"><time>15:55</time><svg class="read" width="35" height="22"><use href="#checks"/></svg></span></p>
				<svg class="tail" width="40" height="60"><use href="#tail"/></svg>
			</div>
		</div>

		<button class="scroll-down" type="button" aria-label="Ir al final">
			<svg width="38" height="24" viewBox="0 0 38 24" aria-hidden="true"><path class="line" stroke-width="6" d="M4 4L19 19L34 4"/></svg>
		</button>
	</main>

	<footer class="composer">
		<button class="plain" type="button" aria-label="Adjuntar">
			<svg width="60" height="60" viewBox="0 0 60 60" aria-hidden="true"><path class="line" stroke-width="6" d="M30 3V57M3 30H57"/></svg>
		</button>
		<div class="field">
			<input type="text" aria-label="Mensaje">
			<button class="plain" type="button" aria-label="Stickers">
				<svg width="56" height="56" viewBox="0 0 56 56" aria-hidden="true"><path class="line" stroke-width="4" d="M53 30C54 20 54 14 50 8C45 2 38 2 27 2C16 2 10 3 6 8C2 14 2 20 2 28C2 38 3 44 8 49C12 53 20 54 29 53C34 52 51 36 53 30ZM29 53C31 44 29 38 33 34C37 30 46 33 53 30"/></svg>
			</button>
		</div>
		<div class="actions">
			<button class="plain" type="button" aria-label="Cámara">
				<svg width="70" height="56" viewBox="0 0 70 56" aria-hidden="true"><path class="line" stroke-width="5" d="M8 10H16C22 10 22 3 27 3H41C46 3 46 10 52 10H62Q67 10 67 15V47Q67 52 62 52H8Q3 52 3 47V15Q3 10 8 10Z"/><circle class="line" stroke-width="5" cx="35" cy="31" r="13"/><circle cx="55" cy="20" r="4" fill="#fafafa"/></svg>
			</button>
			<button class="plain" type="button" aria-label="Grabar audio">
				<svg width="48" height="70" viewBox="0 0 48 70" aria-hidden="true"><rect class="line" stroke-width="5" x="13" y="3" width="21" height="44" rx="10"/><path class="line" stroke-width="5" d="M3 36C3 66 45 66 45 36M24 58V67"/></svg>
			</button>
		</div>
	</footer>
</body>
</html>
```

FILE: styles.css
```css
* {
	box-sizing: border-box;
}
body {
	margin: 0;
	height: 100vh;
	display: flex;
	flex-direction: column;
	background: #111212;
	color: #fafafa;
	font-family: Inter, "Liberation Sans", sans-serif;
	font-size: 41px;
	line-height: 57px;
}
button {
	font: inherit;
	color: inherit;
	border: none;
	background: none;
	padding: 0;
	cursor: pointer;
}
svg {
	display: block;
	flex: none;
}
.defs {
	position: absolute;
}
.line {
	fill: none;
	stroke: #fafafa;
	stroke-linecap: round;
	stroke-linejoin: round;
}

/* top bar */
.header {
	flex: none;
	padding: 58px 48px 30px;
}
.status {
	display: flex;
	justify-content: space-between;
	align-items: center;
	height: 60px;
	padding: 0 50px 0 78px;
}
.status-left {
	display: flex;
	align-items: center;
	gap: 14px;
	font-size: 52px;
	font-weight: 600;
	color: #fff;
}
.status-right {
	display: flex;
	align-items: center;
	gap: 22px;
}
.nav {
	display: flex;
	align-items: center;
	margin-top: 59px;
}
.glass {
	display: flex;
	align-items: center;
	justify-content: center;
	height: 132px;
	border: 2px solid #363837;
	border-radius: 66px;
	background: #1e1f1f;
}
.back {
	width: 132px;
	gap: 16px;
	padding-left: 4px;
	font-size: 52px;
}
.avatar {
	display: flex;
	align-items: center;
	justify-content: center;
	gap: 3px;
	width: 120px;
	height: 120px;
	margin: 0 26px;
	border-radius: 50%;
	background: #fff;
	color: #000;
	font-family: "DejaVu Sans", sans-serif;
	font-size: 19px;
	font-weight: 700;
}
.avatar-dot {
	width: 9px;
	height: 9px;
	border-radius: 50%;
	background: #22c55e;
}
.name {
	flex: 1;
	margin: 0;
	font-size: 46px;
	font-weight: 600;
}
.call {
	width: 150px;
	gap: 12px;
	padding-left: 8px;
}

/* conversation */
.chat {
	position: relative;
	flex: 1;
	min-height: 0;
	overflow: hidden;
	background: #090909;
}
.wallpaper {
	position: absolute;
	top: 0;
	left: 0;
	width: 100%;
	height: 100%;
	fill: none;
	stroke: #242424;
	stroke-width: 3;
	stroke-linecap: round;
	stroke-linejoin: round;
}
.messages {
	position: relative;
	display: flex;
	flex-direction: column;
	gap: 40px;
	padding: 33px 50px 40px;
}
.bubble {
	position: relative;
	max-width: 866px;
	padding: 14px 28px 12px;
	border-radius: 38px;
}
.bubble p {
	margin: 0;
}
.bubble ol {
	margin: 12px 0;
	padding-left: 49px;
}
.bubble b {
	font-weight: 700;
}
.in {
	align-self: flex-start;
	background: #242625;
	fill: #242625;
}
.out {
	align-self: flex-end;
	background: #144d37;
	fill: #144d37;
}
.confirm {
	max-width: 845px;
}
.tail {
	position: absolute;
	bottom: 0;
	right: -18px;
}
.in .tail {
	right: auto;
	left: -18px;
	transform: scaleX(-1);
}
/* the negative margin keeps the time from making the bubble taller */
.meta {
	float: right;
	display: flex;
	align-items: center;
	gap: 8px;
	margin: 24px 2px -2px 30px;
	font-size: 29px;
	line-height: 34px;
	color: #a0a1a1;
}
.out .meta {
	color: #9fb6ac;
}
.read {
	fill: none;
	stroke: #9fb6ac;
	stroke-width: 3;
	stroke-linecap: round;
	stroke-linejoin: round;
}
.scroll-down {
	position: absolute;
	right: 27px;
	bottom: 72px;
	display: flex;
	align-items: center;
	justify-content: center;
	width: 96px;
	height: 96px;
	border-radius: 50%;
	background: #242625;
}

/* message box */
.composer {
	flex: none;
	display: flex;
	align-items: center;
	gap: 41px;
	padding: 30px 50px 126px 40px;
}
.field {
	flex: 1;
	display: flex;
	align-items: center;
	height: 81px;
	padding: 0 33px 0 30px;
	border: 1px solid #3e3f3f;
	border-radius: 41px;
	background: #2a2a2a;
}
.field input {
	flex: 1;
	min-width: 0;
	border: none;
	outline: none;
	background: none;
	color: inherit;
	font: inherit;
}
.actions {
	display: flex;
	align-items: center;
	gap: 58px;
	margin-left: 16px;
}
```
